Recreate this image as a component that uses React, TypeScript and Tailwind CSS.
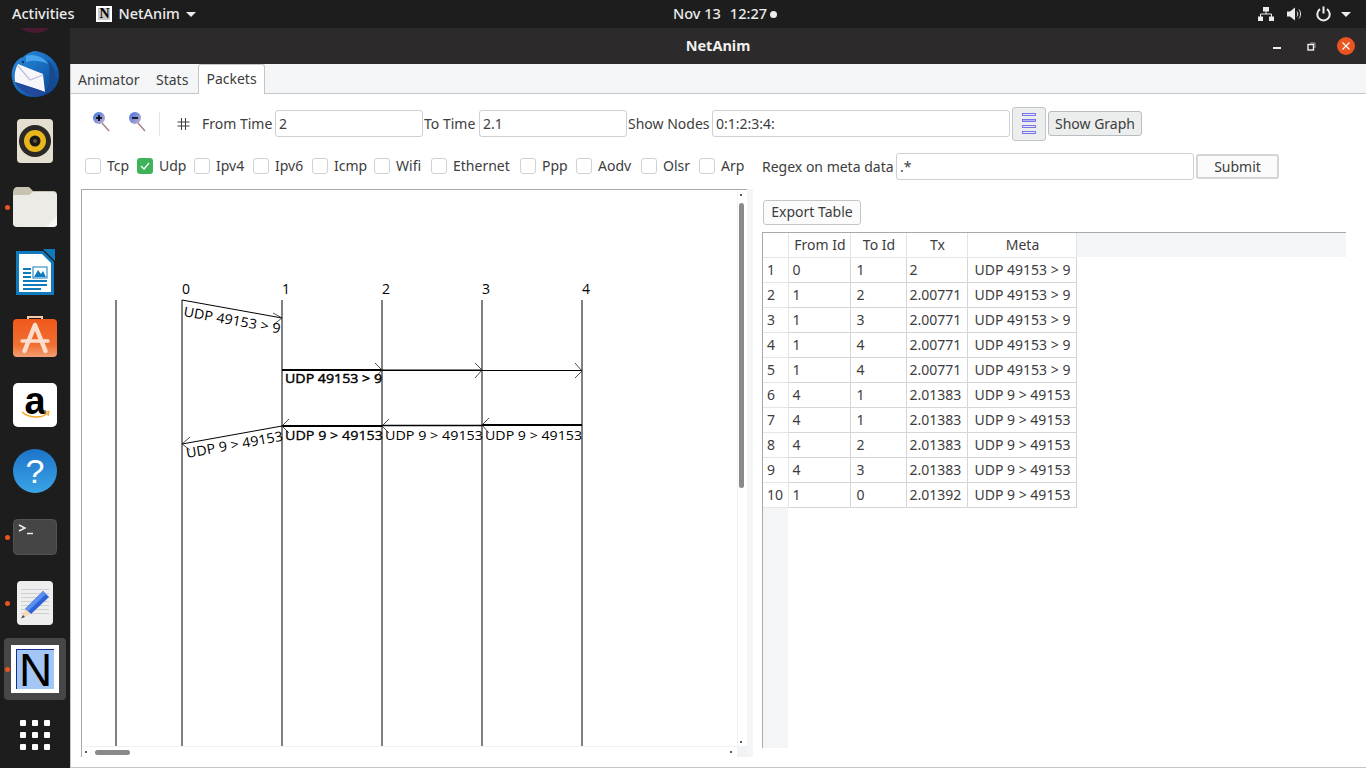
import { ReactNode } from "react";

const nodeXs = [182, 282, 382, 482, 582];

const filters = [
  { label: "Tcp", width: "w-[52px]" },
  { label: "Udp", width: "w-[57px]", checked: true },
  { label: "Ipv4", width: "w-[59px]" },
  { label: "Ipv6", width: "w-[59px]" },
  { label: "Icmp", width: "w-[62px]" },
  { label: "Wifi", width: "w-[57px]" },
  { label: "Ethernet", width: "w-[89px]" },
  { label: "Ppp", width: "w-[56px]" },
  { label: "Aodv", width: "w-[65px]" },
  { label: "Olsr", width: "w-[58px]" },
  { label: "Arp", width: "w-[63px]" },
];

const rows = [
  ["1", "0", "1", "2", "UDP 49153 > 9"],
  ["2", "1", "2", "2.00771", "UDP 49153 > 9"],
  ["3", "1", "3", "2.00771", "UDP 49153 > 9"],
  ["4", "1", "4", "2.00771", "UDP 49153 > 9"],
  ["5", "1", "4", "2.00771", "UDP 49153 > 9"],
  ["6", "4", "1", "2.01383", "UDP 9 > 49153"],
  ["7", "4", "1", "2.01383", "UDP 9 > 49153"],
  ["8", "4", "2", "2.01383", "UDP 9 > 49153"],
  ["9", "4", "3", "2.01383", "UDP 9 > 49153"],
  ["10", "1", "0", "2.01392", "UDP 9 > 49153"],
];

function DockItem({ children, running, active }: { children: ReactNode; running?: boolean; active?: boolean }) {
  return (
    <div className="relative flex h-[66px] w-[70px] shrink-0 items-center justify-center">
      {active ? <div className="absolute left-[4px] top-[2px] h-[62px] w-[62px] rounded-[4px] bg-[#474747]" /> : null}
      {running ? <div className="absolute left-[5px] top-[31px] h-[5px] w-[5px] rounded-full bg-[#e95420]" /> : null}
      <div className="relative">{children}</div>
    </div>
  );
}

function Thunderbird() {
  return (
    <svg className="block" width="50" height="50" viewBox="0 0 50 50">
      <defs>
        <linearGradient id="tb" x1="0" y1="0" x2="1" y2="1">
          <stop offset="0" stopColor="#2f8fe0" />
          <stop offset="0.55" stopColor="#1566b8" />
          <stop offset="1" stopColor="#0b3a86" />
        </linearGradient>
      </defs>
      <path d="M24 1 C38 2 49 12 49 25 C49 37 40 46 26 47 C14 48 4 41 2 29 C0 18 6 9 13 7 C16 4 20 2 24 1Z" fill="url(#tb)" />
      <path d="M16 6 C24 3 34 7 38 14 C30 10 22 10 16 12Z" fill="#49a6ee" />
      <path d="M38 10 C46 18 48 30 42 38 C39 42 34 45 30 46 L35 42 C40 36 41 22 38 10Z" fill="#17498f" />
      <path d="M8 14 L33 24 L35 42 C25 38 14 35 5 32 C4 25 5 19 8 14Z" fill="#f6f6fb" />
      <path d="M8 16 L20 30 L33 25" fill="none" stroke="#b9bfd6" strokeWidth="1.2" />
      <path d="M5 32 C14 35 25 38 35 42 L29 46 C18 46 9 40 5 32Z" fill="#24489c" />
      <circle cx="13" cy="12" r="1.2" fill="#0b2f6f" />
    </svg>
  );
}

function Rhythmbox() {
  return (
    <svg className="block" width="36" height="44" viewBox="0 0 36 44">
      <rect width="36" height="44" rx="4" fill="#e4dfd0" />
      <circle cx="18" cy="22" r="16" fill="#2a2926" />
      <circle cx="18" cy="22" r="11" fill="#e8b71c" />
      <circle cx="18" cy="22" r="5.5" fill="#1b1a17" />
      <circle cx="18" cy="22" r="2" fill="#5c5440" />
    </svg>
  );
}

function Folder() {
  return (
    <svg className="block" width="46" height="42" viewBox="0 0 46 42">
      <path d="M1 6 C1 3 3 1 5 1 L17 1 L21 5 L41 5 C44 5 45 7 45 9 L45 14 L1 14Z" fill="#c7c2b2" />
      <path d="M1 9 L17 9 L21 6 L41 6 C44 6 45 8 45 10 L45 38 C45 40 43 41 41 41 L5 41 C3 41 1 40 1 38Z" fill="#ecebe6" />
      <path d="M34 41 L45 30 L45 38 C45 40 43 41 41 41Z" fill="#f7f7f4" />
    </svg>
  );
}

function Writer() {
  return (
    <svg className="block" width="40" height="48" viewBox="0 0 40 48">
      <path d="M1 2 L28 2 L39 13 L39 46 L1 46Z" fill="#0f7bbd" />
      <path d="M4 5 L27 5 L36 14 L36 43 L4 43Z" fill="#ffffff" />
      <path d="M28 0 L40 0 L40 12Z" fill="#0f7bbd" />
      <rect x="8" y="19" width="8" height="2" fill="#0f7bbd" />
      <rect x="8" y="23" width="8" height="2" fill="#0f7bbd" />
      <rect x="8" y="27" width="8" height="2" fill="#0f7bbd" />
      <rect x="18" y="18" width="14" height="11" fill="#ffffff" stroke="#0f7bbd" />
      <path d="M19 28 L23 21 L26 25 L28 22 L31 28Z" fill="#0f7bbd" />
      <rect x="8" y="31" width="24" height="2" fill="#0f7bbd" />
      <rect x="8" y="35" width="24" height="2" fill="#0f7bbd" />
      <rect x="8" y="39" width="18" height="2" fill="#0f7bbd" />
    </svg>
  );
}

function SoftwareIcon() {
  return (
    <svg className="mb-[4px] block" width="44" height="42" viewBox="0 0 44 42">
      <defs>
        <linearGradient id="sw" x1="0" y1="0" x2="0" y2="1">
          <stop offset="0" stopColor="#f0581a" />
          <stop offset="0.7" stopColor="#ef7133" />
          <stop offset="1" stopColor="#f2a077" />
        </linearGradient>
      </defs>
      <path d="M15 4 L15 1 L29 1 L29 4" fill="none" stroke="#f6c9ae" strokeWidth="2" />
      <rect y="3" width="44" height="38" rx="4" fill="url(#sw)" />
      <path d="M22 9 L11.5 35 M22 9 L32.5 35" stroke="#fbdccd" strokeWidth="4.5" strokeLinecap="round" />
      <path d="M9 25 L35 25" stroke="#fbdccd" strokeWidth="3.5" strokeLinecap="round" />
    </svg>
  );
}

function Amazon() {
  return (
    <div className="relative h-[44px] w-[44px] rounded-[5px] bg-white">
      <div className="flex h-[34px] items-center justify-center pt-[2px] font-['Liberation_Sans',sans-serif] text-[38px] font-bold leading-[34px] text-black">
        a
      </div>
      <svg className="absolute left-[8px] top-[27px]" width="30" height="10" viewBox="0 0 30 10">
        <path d="M1 2 C8 8 20 9 27 3" fill="none" stroke="#f5a623" strokeWidth="1.6" />
        <path d="M23 2 L28 1.5 L27 6" fill="none" stroke="#f5a623" strokeWidth="1.2" />
      </svg>
    </div>
  );
}

function HelpIcon() {
  return (
    <div className="flex h-[44px] w-[44px] items-center justify-center rounded-full bg-gradient-to-b from-[#1d74c9] to-[#3ba4e6] font-['Liberation_Sans',sans-serif] text-[34px] leading-none text-white">
      ?
    </div>
  );
}

function TerminalIcon() {
  return (
    <svg className="block" width="44" height="36" viewBox="0 0 44 36">
      <rect x="0.5" y="0.5" width="43" height="35" rx="4" fill="#454545" stroke="#525252" />
      <path d="M6 6 L12 9 L6 12" fill="none" stroke="#f2f2f2" strokeWidth="1.4" />
      <path d="M14 14.5 L20 14.5" stroke="#f2f2f2" strokeWidth="1.4" />
    </svg>
  );
}

function EditorIcon() {
  return (
    <svg className="block" width="36" height="44" viewBox="0 0 36 44">
      <rect width="36" height="44" rx="4" fill="#eeeeee" />
      {[8, 12, 16, 20, 24, 28, 32].map((y) => (
        <rect key={y} x="4" y={y} width="28" height="1" fill="#cfcfcf" />
      ))}
      <path d="M26 10 L32 16 L14 33 L8 28Z" fill="#2f62d8" />
      <path d="M26 10 L29 13 L11 30.5 L8 28Z" fill="#5c8ff0" />
      <path d="M8 28 L14 33 L5 37Z" fill="#f8d9b5" />
      <path d="M6 34 L8 36 L4 37.5Z" fill="#444444" />
    </svg>
  );
}

function NetAnimIcon() {
  return (
    <div className="flex h-[48px] w-[48px] items-center justify-center bg-white">
      <div className="flex h-[40px] w-[38px] items-center justify-center border-l border-t border-[#1b2f8f] bg-[#a4c6f5] font-['Liberation_Sans',sans-serif] text-[46px] leading-[40px] text-black">
        N
      </div>
    </div>
  );
}

function Dock() {
  return (
    <div className="flex w-[70px] shrink-0 flex-col overflow-hidden bg-[#1d1d1d]">
      <div className="-mt-[52px] flex h-[66px] shrink-0 items-center justify-center">
        <div className="h-[48px] w-[48px] rounded-full bg-[#4a1a33]" />
      </div>
      <DockItem><Thunderbird /></DockItem>
      <DockItem><Rhythmbox /></DockItem>
      <DockItem running><Folder /></DockItem>
      <DockItem><Writer /></DockItem>
      <DockItem><SoftwareIcon /></DockItem>
      <DockItem><Amazon /></DockItem>
      <DockItem><HelpIcon /></DockItem>
      <DockItem running><TerminalIcon /></DockItem>
      <DockItem running><EditorIcon /></DockItem>
      <DockItem running active><NetAnimIcon /></DockItem>
      <DockItem>
        <div className="grid grid-cols-3 gap-[6px]">
          {Array.from({ length: 9 }).map((_, i) => (
            <div key={i} className="h-[6px] w-[6px] rounded-[1px] bg-white" />
          ))}
        </div>
      </DockItem>
    </div>
  );
}

function TopBar() {
  return (
    <div className="grid h-[28px] shrink-0 grid-cols-[1fr_auto_1fr] items-center bg-[#1d1d1d] text-[14.5px] font-medium text-[#ececec]">
      <div className="flex items-center">
        <span className="ml-[12px]">Activities</span>
        <div className="ml-[22px] flex h-[16px] w-[16px] items-center justify-center bg-white">
          <div className="flex h-[12px] w-[12px] items-center justify-center bg-[#c9c9c9] font-['Liberation_Serif',serif] text-[14px] font-bold leading-none text-black">
            N
          </div>
        </div>
        <span className="ml-[6px]">NetAnim</span>
        <div className="ml-[6px] h-0 w-0 border-x-[5px] border-t-[5px] border-x-transparent border-t-[#ececec]" />
      </div>
      <div className="ml-[84px] flex items-center">
        <span>Nov 13</span>
        <span className="ml-[9px]">12:27</span>
        <div className="ml-[3px] h-[7px] w-[7px] rounded-full bg-[#ececec]" />
      </div>
      <div className="flex items-center justify-end pr-[15px]">
        <svg width="16" height="14" viewBox="0 0 16 14" fill="#ececec">
          <rect x="5" y="0" width="6" height="4.5" />
          <rect x="0" y="9.5" width="5" height="4.5" />
          <rect x="11" y="9.5" width="5" height="4.5" />
          <path d="M8 4 V7 M2.5 10 V7 H13.5 V10" fill="none" stroke="#ececec" />
        </svg>
        <svg className="ml-[13px]" width="15" height="14" viewBox="0 0 15 14" fill="#ececec">
          <path d="M0 4.5 H3 L8 0.5 V13.5 L3 9.5 H0Z" />
          <path d="M10 4.5 C11 6 11 8 10 9.5 M12 2.5 C14 5 14 9 12 11.5" fill="none" stroke="#ececec" />
        </svg>
        <svg className="ml-[14px]" width="15" height="16" viewBox="0 0 15 16" fill="none" stroke="#ececec" strokeWidth="2">
          <path d="M7.5 0.5 V7.5" />
          <path d="M4 3.2 A6.2 6.2 0 1 0 11 3.2" />
        </svg>
        <div className="ml-[10px] h-0 w-0 border-x-[5px] border-t-[5px] border-x-transparent border-t-[#ececec]" />
      </div>
    </div>
  );
}

function TitleBar() {
  return (
    <div className="flex h-[36px] shrink-0 items-center bg-[#2c2a2b] pr-[11px]">
      <div className="flex-1 pb-[1px] pl-[219px] text-center text-[14.5px] font-bold text-[#f0f0f0]">NetAnim</div>
      <div className="ml-[126px] mt-[4px] h-[2px] w-[8px] bg-[#f0f0f0]" />
      <svg className="ml-[26px]" width="9" height="9" viewBox="0 0 9 9" fill="none">
        <path d="M3 1 H8 V6" stroke="#9c9c9c" />
        <rect x="1" y="2.5" width="5.5" height="5.5" stroke="#f0f0f0" strokeWidth="1.4" />
      </svg>
      <div className="ml-[21px] flex h-[18px] w-[18px] items-center justify-center rounded-full bg-[#e95420]">
        <svg width="8" height="8" viewBox="0 0 8 8" stroke="#ffffff" strokeWidth="1.2">
          <path d="M0.5 0.5 L7.5 7.5 M7.5 0.5 L0.5 7.5" />
        </svg>
      </div>
    </div>
  );
}

function Magnifier({ id, minus }: { id: string; minus?: boolean }) {
  return (
    <svg width="18" height="22" viewBox="0 0 18 22">
      <defs>
        <linearGradient id={id} x1="0" y1="0" x2="1" y2="1">
          <stop offset="0" stopColor="#3f6fe0" />
          <stop offset="1" stopColor="#c9b3cf" />
        </linearGradient>
      </defs>
      <path d="M10 12 L17 20" stroke="#a9828c" strokeWidth="1.5" />
      <circle cx="7" cy="7" r="6" fill={`url(#${id})`} />
      <path d="M4 7 H10" stroke="#000000" strokeWidth="1.6" />
      {minus ? null : <path d="M7 4 V10" stroke="#000000" strokeWidth="1.6" />}
    </svg>
  );
}

function Toolbar() {
  const input = "h-[27px] rounded-[3px] border border-[#cdd0d4] bg-white px-[3px] text-[14px] leading-[25px] text-[#3d3d3d]";
  return (
    <div className="mt-[13px] flex h-[33px] shrink-0 items-center pl-[21px] text-[14px] text-[#3d3d3d]">
      <div className="-mt-[3px] w-[36px]"><Magnifier id="zoom-in" /></div>
      <div className="-mt-[3px] w-[31px]"><Magnifier id="zoom-out" minus /></div>
      <div className="h-[24px] w-px bg-[#e3e4e6]" />
      <svg className="ml-[17px]" width="13" height="12" viewBox="0 0 13 12" stroke="#3d3d3d">
        <path d="M4.5 0 V12 M8.5 0 V12 M0.5 4 H12.5 M0.5 8 H12.5" />
      </svg>
      <span className="ml-[12px] w-[73px]">From Time</span>
      <div className={`w-[148px] ${input}`}>2</div>
      <span className="ml-px w-[55px] whitespace-nowrap">To Time</span>
      <div className={`w-[148px] ${input}`}>2.1</div>
      <span className="ml-px w-[84px] whitespace-nowrap">Show Nodes</span>
      <div className={`w-[298px] ${input}`}>0:1:2:3:4:</div>
      <div className="ml-[2px] flex h-[34px] w-[34px] items-center justify-center self-start rounded-[3px] border border-[#c2c5c9] bg-[#eceded]">
        <svg width="16" height="22" viewBox="0 0 16 22" fill="#e6e6fa" stroke="#6f6ae8" strokeWidth="0.9">
          <rect x="1.5" y="0.5" width="13" height="2" />
          <rect x="1.5" y="6.5" width="13" height="2" fill="#b7b4ee" />
          <rect x="1.5" y="12.5" width="13" height="2" />
          <rect x="1.5" y="18.5" width="13" height="2" />
        </svg>
      </div>
      <div className="ml-[2px] flex h-[25px] w-[94px] items-center justify-center rounded-[3px] border border-[#b9bcc0] bg-[#eceded]">
        Show Graph
      </div>
    </div>
  );
}

function FilterRow() {
  return (
    <div className="mt-[13px] flex h-[27px] shrink-0 items-center pl-[14px] text-[14px] text-[#3d3d3d]">
      {filters.map((f) => (
        <div key={f.label} className={`mb-[2px] flex shrink-0 items-center ${f.width}`}>
          {f.checked ? (
            <div className="flex h-[16px] w-[16px] items-center justify-center rounded-[3px] bg-[#3eb35a]">
              <svg width="10" height="8" viewBox="0 0 10 8" fill="none" stroke="#ffffff" strokeWidth="1.3">
                <path d="M1 4 L4 7 L9 1" />
              </svg>
            </div>
          ) : (
            <div className="h-[16px] w-[16px] rounded-[3px] border border-[#cfd1d4] bg-white" />
          )}
          <span className="ml-[6px]">{f.label}</span>
        </div>
      ))}
      <span className="w-[134px] whitespace-nowrap">Regex on meta data</span>
      <div className="h-[27px] w-[298px] rounded-[3px] border border-[#cdd0d4] bg-white px-[3px] leading-[25px]">.*</div>
      <div className="ml-[2px] flex h-[25px] w-[83px] items-center justify-center rounded-[3px] border-2 border-[#d3d5d8] bg-[#fbfbfb]">
        Submit
      </div>
    </div>
  );
}

function Arrow({ x1, y1, x2, y2, head, width = 1 }: { x1: number; y1: number; x2: number; y2: number; head: string; width?: number }) {
  return (
    <>
      <line x1={x1} y1={y1} x2={x2} y2={y2} stroke="#000000" strokeWidth={width} />
      <polyline points={head} fill="none" stroke="#222222" strokeWidth="0.8" />
    </>
  );
}

function SequenceDiagram() {
  const labelFont = { fontFamily: "'Open Sans', 'Noto Sans', sans-serif", fontSize: 13.5 };
  return (
    <svg className="block h-[556px] w-[655px]" viewBox="82 190 655 556">
      <line x1="116" y1="300" x2="116" y2="746" stroke="#808080" strokeWidth="2" />
      {nodeXs.map((x, i) => (
        <g key={x}>
          <line x1={x} y1="300" x2={x} y2="746" stroke="#808080" strokeWidth="2" />
          <text x={x + 4} y="294" textAnchor="middle" fill="#000000" style={{ ...labelFont, fontSize: 14 }}>{i}</text>
        </g>
      ))}

      <Arrow x1={182} y1={300} x2={282} y2={318} head="273,313 282,318 273,325" />
      <text transform="translate(183 316) rotate(10.2)" fill="#000000" textLength="98" lengthAdjust="spacingAndGlyphs" style={labelFont}>UDP 49153 &gt; 9</text>

      <Arrow x1={282} y1={370} x2={382} y2={370} head="375,363 382,370 375,378" width={2} />
      <Arrow x1={382} y1={370.25} x2={482} y2={370.25} head="475,363 482,370 475,378" width={1.5} />
      <Arrow x1={482} y1={370.5} x2={582} y2={370.5} head="575,363 582,371 575,378" />
      <text x="285" y="383" fill="#000000" stroke="#000000" strokeWidth="0.45" textLength="97" lengthAdjust="spacingAndGlyphs" style={labelFont}>UDP 49153 &gt; 9</text>

      <Arrow x1={582} y1={425} x2={482} y2={425} head="489,418 482,425 489,433" width={2} />
      <Arrow x1={482} y1={425.5} x2={382} y2={425.5} head="389,419 382,426 389,433" width={1.5} />
      <Arrow x1={382} y1={426} x2={282} y2={426} head="289,419 282,426 289,433" width={2} />
      <Arrow x1={282} y1={426} x2={182} y2={444} head="190,437 182,444 190,450" />
      <text x="285" y="439.5" fill="#000000" stroke="#000000" strokeWidth="0.3" textLength="98" lengthAdjust="spacingAndGlyphs" style={labelFont}>UDP 9 &gt; 49153</text>
      <text x="385" y="439.5" fill="#000000" textLength="98" lengthAdjust="spacingAndGlyphs" style={labelFont}>UDP 9 &gt; 49153</text>
      <text x="485" y="439.5" fill="#000000" textLength="97" lengthAdjust="spacingAndGlyphs" style={labelFont}>UDP 9 &gt; 49153</text>
      <text transform="translate(187 458) rotate(-10.2)" fill="#000000" textLength="98" lengthAdjust="spacingAndGlyphs" style={labelFont}>UDP 9 &gt; 49153</text>
    </svg>
  );
}

function DiagramFrame() {
  return (
    <div className="ml-[10px] mt-[9px] flex h-[568px] w-[666px] shrink-0 flex-col border-l border-t border-[#a6a9ad] bg-white">
      <div className="flex h-[556px]">
        <SequenceDiagram />
        <div className="flex w-[10px] flex-col border-l border-[#f0f1f2] pl-px">
          <div className="ml-px mt-[4px] h-[2px] w-[2px] bg-[#5a5a5a]" />
          <div className="mt-[7px] h-[285px] w-[5px] rounded-full bg-[#8a8a8a]" />
          <div className="ml-[1px] mt-[253px] h-[2px] w-[2px] bg-[#5a5a5a]" />
        </div>
      </div>
      <div className="flex h-[11px] items-center border-t border-[#f0f1f2] pl-[3px]">
        <div className="h-[2px] w-[2px] bg-[#5a5a5a]" />
        <div className="ml-[8px] h-[5px] w-[35px] rounded-full bg-[#8a8a8a]" />
        <div className="ml-[600px] h-[2px] w-[2px] bg-[#5a5a5a]" />
        <div className="ml-[5px] h-[10px] w-[10px] bg-[#f2f3f4]" />
      </div>
    </div>
  );
}

function PacketsTable() {
  const cell = "whitespace-nowrap border-b border-r border-[#d4d5d6] pl-[6px] text-left font-normal";
  const head = "border-b border-r border-[#e4e5e6] bg-white pb-[1px] pl-[2px] text-center font-normal";
  return (
    <div className="h-[516px] w-[584px] overflow-hidden border-l border-t border-[#a6a9ad] bg-white text-[14px] text-[#3d3d3d]">
      <table className="w-[583px] table-fixed">
        <colgroup>
          <col className="w-[25px]" />
          <col className="w-[62px]" />
          <col className="w-[56px]" />
          <col className="w-[61px]" />
          <col className="w-[109px]" />
          <col />
        </colgroup>
        <thead>
          <tr className="h-[24px]">
            <th className={head} />
            <th className={head}>From Id</th>
            <th className={head}>To Id</th>
            <th className={head}>Tx</th>
            <th className={head}>Meta</th>
            <th className="bg-[#f4f5f6]" />
          </tr>
        </thead>
        <tbody>
          {rows.map((r) => (
            <tr key={r[0]} className="h-[25px]">
              <td className="border-b border-r border-[#e4e5e6] bg-white pl-[4px] text-left">{r[0]}</td>
              <td className={`${cell} !pl-[4px]`}>{r[1]}</td>
              <td className={cell}>{r[2]}</td>
              <td className={`${cell} !pl-[3px]`}>{r[3]}</td>
              <td className={`${cell} !pl-[7px]`}>{r[4]}</td>
              <td />
            </tr>
          ))}
          <tr className="h-[241px]">
            <td className="bg-[#f4f5f6]" />
            <td colSpan={5} />
          </tr>
        </tbody>
      </table>
    </div>
  );
}

export default function App() {
  return (
    <div className="flex h-[768px] w-[1366px] flex-col overflow-hidden bg-[#1d1d1d] font-['Noto_Sans',sans-serif]">
      <TopBar />
      <div className="flex min-h-0 flex-1">
        <Dock />
        <div className="flex min-w-0 flex-1 flex-col">
          <TitleBar />
          <div className="flex min-h-0 flex-1 flex-col border-l border-[#c3c5c8] bg-[#f4f5f6]">
            <div className="relative z-10 flex h-[30px] shrink-0 items-end pl-[7px] text-[14px] text-[#3d3d3d]">
              <div className="flex h-[29px] w-[63px] items-center">Animator</div>
              <div className="ml-[15px] flex h-[29px] w-[42px] items-center">Stats</div>
              <div className="flex h-[30px] w-[67px] items-center justify-center rounded-t-[3px] border-x border-t border-[#c3c5c8] bg-white pb-[2px]">
                Packets
              </div>
            </div>
            <div className="-mt-px flex min-h-0 flex-1 flex-col border-y border-[#c3c5c8] bg-white">
              <Toolbar />
              <FilterRow />
              <div className="flex min-h-0 flex-1">
                <DiagramFrame />
                <div className="mt-[9px] h-[568px] w-[6px] bg-[#f4f5f6]" />
                <div className="ml-[9px] flex flex-col">
                  <div className="ml-[1px] mt-[20px] flex h-[25px] w-[98px] items-center justify-center rounded-[3px] border border-[#c3c5c8] bg-[#fbfbfb] pb-[2px] text-[14px] text-[#3d3d3d]">
                    Export Table
                  </div>
                  <div className="mt-[7px]">
                    <PacketsTable />
                  </div>
                </div>
              </div>
            </div>
          </div>
        </div>
      </div>
    </div>
  );
}
